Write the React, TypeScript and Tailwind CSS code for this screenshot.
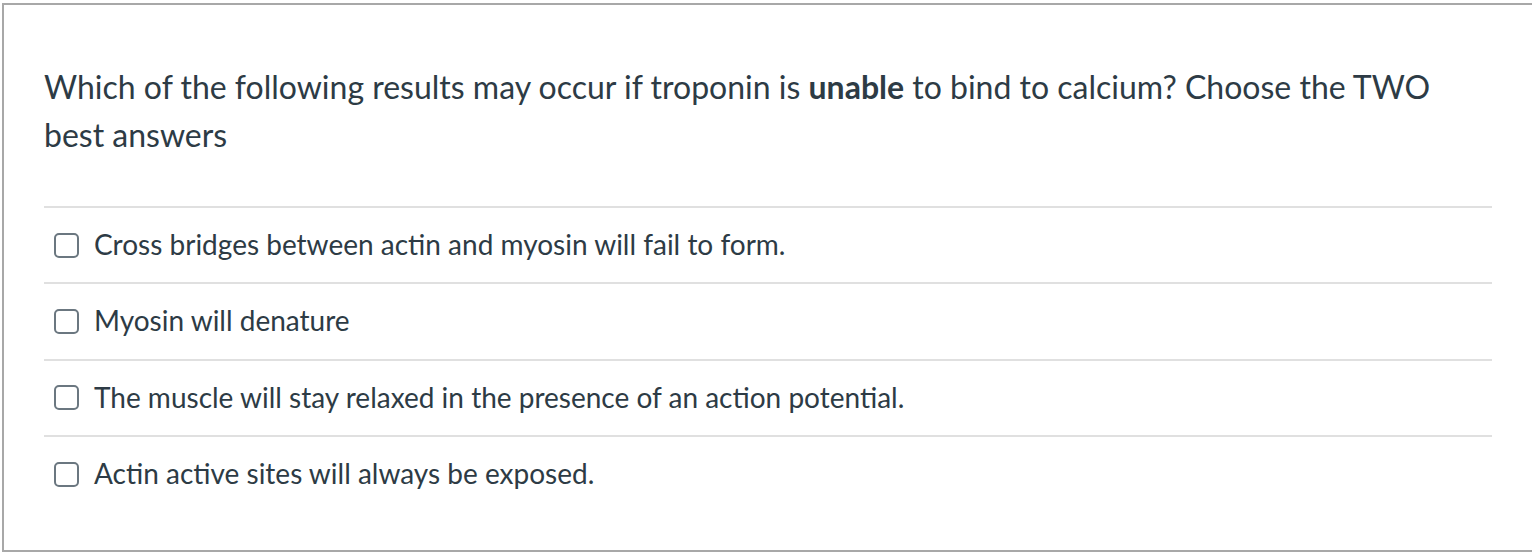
import React from "react";

const options = [
  "Cross bridges between actin and myosin will fail to form.",
  "Myosin will denature",
  "The muscle will stay relaxed in the presence of an action potential.",
  "Actin active sites will always be exposed.",
];

export default function App() {
  return (
    <div
      className="w-[1532px] h-[552px] overflow-hidden bg-white"
      style={{ fontFamily: "Lato, 'Noto Sans', sans-serif" }}
    >
      <div className="mt-[3px] ml-[2px] h-[549px] border-2 border-r-0 border-[#a8a8a8] bg-white">
        <div className="pt-[58px] pl-[40px] pr-[40px] text-[#2d3b45]">
          <p className="text-[32px] leading-[48px]">
            Which of the following results may occur if troponin is{" "}
            <strong className="font-bold">unable</strong> to bind to calcium? Choose the TWO
            <br />
            best answers
          </p>
          <div className="mt-[47px]">
            {options.map((o) => (
              <div
                key={o}
                className="flex h-[76.3px] items-center border-t-2 border-[#e0e0e0]"
              >
                <span className="ml-[10px] block h-[25px] w-[25px] shrink-0 rounded-[5px] border-2 border-[#6b7780] bg-white" />
                <span className="ml-[15px] mb-[2px] text-[28px] leading-[36px]">{o}</span>
              </div>
            ))}
          </div>
        </div>
      </div>
    </div>
  );
}
